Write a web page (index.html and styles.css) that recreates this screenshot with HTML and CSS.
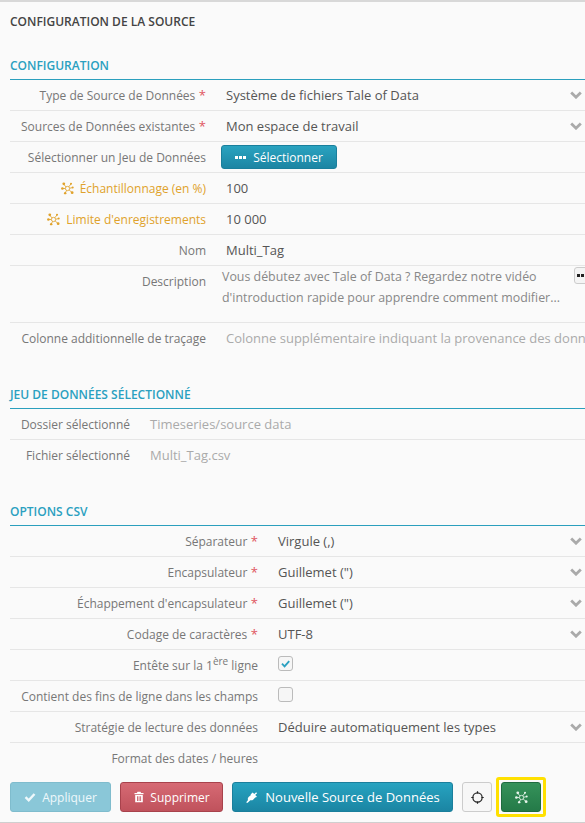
FILE: index.html
```html
<!DOCTYPE html>
<html lang="fr">
<head>
<meta charset="utf-8">
<title>Configuration de la source</title>
<link rel="stylesheet" href="styles.css">
</head>
<body>
<svg class="defs" width="0" height="0" aria-hidden="true">
  <symbol id="net" viewBox="0 0 14 14">
    <g fill="none" stroke="currentColor" stroke-width="0.900">
      <path d="M3 2.500 5.500 5.400M10.800 2 8.400 5.200M1.500 7H4.700M4.500 12 6 9.100M12 11.500 8.700 8.500M12.600 6 9.300 6.700"/>
      <circle cx="7" cy="7" r="2.300"/>
    </g>
    <g fill="currentColor">
      <circle cx="3" cy="2" r="1.500"/><circle cx="10.800" cy="1.800" r="1.100"/>
      <circle cx="1.500" cy="7" r="1.400"/><circle cx="4.500" cy="12" r="1.300"/>
      <circle cx="12" cy="11.500" r="1.500"/><circle cx="12.600" cy="6" r="1.100"/>
    </g>
  </symbol>
  <symbol id="chev" viewBox="0 0 12 8">
    <path d="M1.200 1.500 6 6.200l4.800-4.700" fill="none" stroke="currentColor" stroke-width="2.800"/>
  </symbol>
</svg>
<main class="panel">
  <h1 class="title">CONFIGURATION DE LA SOURCE</h1>

  <section class="section s-config">
    <h2 class="heading">CONFIGURATION</h2>
    <div class="row"><div class="label">Type de Source de Données<span class="req">*</span></div><div class="value">Système de fichiers Tale of Data</div><svg class="chev"><use href="#chev"/></svg></div>
    <div class="row"><div class="label">Sources de Données existantes<span class="req">*</span></div><div class="value">Mon espace de travail</div><svg class="chev"><use href="#chev"/></svg></div>
    <div class="row"><div class="label">Sélectionner un Jeu de Données</div><div class="value value-btn"><button class="btn btn-select"><span class="dots"><i></i><i></i><i></i></span>Sélectionner</button></div></div>
    <div class="row"><div class="label label-gold"><svg class="net"><use href="#net"/></svg>Échantillonnage (en %)</div><div class="value">100</div></div>
    <div class="row"><div class="label label-gold"><svg class="net"><use href="#net"/></svg>Limite d'enregistrements</div><div class="value">10 000</div></div>
    <div class="row"><div class="label">Nom</div><div class="value">Multi_Tag</div></div>
    <div class="row row-desc">
      <div class="label">Description</div>
      <div class="value value-muted">Vous débutez avec Tale of Data ? Regardez notre vidéo<br>d'introduction rapide pour apprendre comment modifier...</div>
      <button class="more"><span class="dots"><i></i><i></i></span></button>
    </div>
    <div class="row row-last"><div class="label">Colonne additionnelle de traçage</div><div class="value value-light">Colonne supplémentaire indiquant la provenance des données</div></div>
  </section>

  <section class="section s-dataset">
    <h2 class="heading">JEU DE DONNÉES SÉLECTIONNÉ</h2>
    <div class="row"><div class="label">Dossier sélectionné</div><div class="value value-light">Timeseries/source data</div></div>
    <div class="row row-last"><div class="label">Fichier sélectionné</div><div class="value value-light">Multi_Tag.csv</div></div>
  </section>

  <section class="section s-csv">
    <h2 class="heading">OPTIONS CSV</h2>
    <div class="row"><div class="label">Séparateur<span class="req">*</span></div><div class="value">Virgule (,)</div><svg class="chev"><use href="#chev"/></svg></div>
    <div class="row"><div class="label">Encapsulateur<span class="req">*</span></div><div class="value">Guillemet (")</div><svg class="chev"><use href="#chev"/></svg></div>
    <div class="row"><div class="label">Échappement d'encapsulateur<span class="req">*</span></div><div class="value">Guillemet (")</div><svg class="chev"><use href="#chev"/></svg></div>
    <div class="row"><div class="label">Codage de caractères<span class="req">*</span></div><div class="value">UTF-8</div><svg class="chev"><use href="#chev"/></svg></div>
    <div class="row"><div class="label">Entête sur la 1<sup>ère</sup> ligne</div><div class="value value-check"><span class="check"><svg viewBox="0 0 14 14"><path d="M3.200 7.200 6 10l5-5.500" fill="none" stroke="currentColor" stroke-width="2"/></svg></span></div></div>
    <div class="row"><div class="label">Contient des fins de ligne dans les champs</div><div class="value value-check"><span class="check"></span></div></div>
    <div class="row"><div class="label">Stratégie de lecture des données</div><div class="value">Déduire automatiquement les types</div><svg class="chev"><use href="#chev"/></svg></div>
    <div class="row row-last"><div class="label">Format des dates / heures</div><div class="value"></div></div>
  </section>

  <footer class="actions">
    <button class="btn btn-apply"><svg class="ico" viewBox="0 0 12 12"><path d="M1.500 6.200 4.700 9.300 10.500 3" fill="none" stroke="currentColor" stroke-width="2.400"/></svg>Appliquer</button>
    <button class="btn btn-delete"><svg class="ico ico-trash" viewBox="0 0 12 12"><path fill="currentColor" d="M4.500.8h3l.6 1.200h2.400v1.300h-9V2h2.400zM2.200 4h7.600v7.200H2.200zM4 5.200v4.800h.9V5.200zm1.600 0v4.800h.9V5.200zm1.600 0v4.800h.9V5.200z"/></svg>Supprimer</button>
    <button class="btn btn-new"><svg class="ico ico-plug" viewBox="0 0 14 14"><path fill="currentColor" d="M8.200 1.500 10 3.200 12 1.300l1 1-2 2 1.800 1.700-1 1-.5-.4-2.300 2.500c-1 1-2.200 1.200-3.300.8L3.500 12 2.300 13l-1-1 2-2.200c-.6-1.100-.3-2.300.6-3.300l2.500-2.300-.4-.4z"/></svg>Nouvelle Source de Données</button>
    <button class="btn btn-target"><svg viewBox="0 0 14 14" class="target"><circle cx="7" cy="7" r="5" fill="none" stroke="currentColor" stroke-width="1.300"/><path d="M7 .3v2.400M7 11.300v2.400M.3 7h2.400M11.300 7h2.400" stroke="currentColor" stroke-width="1.300"/></svg></button>
    <span class="highlight"><button class="btn btn-run"><svg class="net net-run"><use href="#net"/></svg></button></span>
  </footer>
</main>
</body>
</html>
```
FILE: styles.css
```css
* { box-sizing: border-box; }
html, body { margin: 0; padding: 0; }
body {
  width: 585px;
  height: 823px;
  overflow: hidden;
  background: #fafafa;
  font-family: "Open Sans", sans-serif;
  font-size: 12px;
  color: #555;
}
.defs { display: block; height: 0; }
.panel {
  height: 823px;
  padding: 0 0 0 10px;
  border-top: 2px solid #d8d8d8;
  border-bottom: 1px solid #cfcfcf;
  overflow: hidden;
}
.title {
  margin: 0;
  padding-top: 11px;
  height: 39px;
  font-size: 12px;
  line-height: 17px;
  font-weight: 600;
  color: #444;
}
.s-config { --col: 196px; padding-top: 16px; }
.s-dataset { --col: 120px; padding-top: 32px; }
.s-csv { --col: 248px; padding-top: 32px; }
.heading {
  margin: 0;
  height: 23px;
  border-bottom: 1px solid #2b9fbd;
  font-size: 12px;
  line-height: 17px;
  font-weight: 600;
  color: #2aa0c0;
}
.row {
  display: flex;
  align-items: center;
  height: 31px;
  width: 575px;
  border-bottom: 1px solid #e6e6e6;
  line-height: 17px;
  overflow: hidden;
}
.row-last { border-bottom: 0; }
.label {
  flex: 0 0 var(--col);
  text-align: right;
  color: #777;
  white-space: nowrap;
}
.label sup { font-size: 10px; line-height: 0; }
.label-gold { color: #e0a22b; display: flex; justify-content: flex-end; align-items: center; }
.req { color: #e0555f; margin-left: 3.5px; font-size: 13px; line-height: 0; }
.value {
  flex: 1 1 0;
  min-width: 0;
  padding-left: 20px;
  font-size: 13px;
  color: #555;
  white-space: nowrap;
  overflow: hidden;
}
.value-light { color: #aaa; }
.value-muted { color: #888; font-size: 12.4px; line-height: 21px; padding-left: 16px; }
.chev { width: 12px; height: 8px; margin-right: 3px; color: #aaa; flex: none; }
.net { width: 13px; height: 13px; margin-right: 6px; flex: none; }
.row-desc { height: 57px; align-items: flex-start; }
.row-desc .label { padding-top: 7px; }
.more {
  flex: none;
  width: 20px;
  height: 17px;
  margin: 1px -9px 0 0;
  padding: 0 0 0 2px;
  background: #f4f4f4;
  border: 1px solid #ccc;
  border-radius: 3px;
  display: flex;
  align-items: center;
}
.more .dots i { background: #222; }
.dots { display: inline-flex; gap: 1px; margin-right: 7px; }
.dots i { width: 3px; height: 3px; background: #fff; display: block; }
.more .dots { margin: 0; }
.btn {
  font-family: "Open Sans", sans-serif;
  font-size: 12px;
  line-height: 17px;
  color: #fff;
  border-radius: 3px;
  border: 1px solid transparent;
  display: inline-flex;
  align-items: center;
  justify-content: center;
  padding: 0;
  flex: none;
}
.btn-select {
  width: 116px;
  height: 24px;
  background: linear-gradient(#2aa3c0, #1c85a3);
  border-color: #1a7f9c;
}
.value-btn { padding-left: 15px; overflow: visible; }
.value-check { display: flex; padding-bottom: 3px; }
.check {
  width: 15px;
  height: 15px;
  border: 1px solid #bbb;
  border-radius: 3px;
  background: #f6f6f6;
  color: #2aa0c0;
  display: block;
}
.check svg { display: block; width: 13px; height: 13px; }
.actions {
  display: flex;
  align-items: center;
  height: 30px;
  margin-top: 8px;
}
.actions .btn { height: 30px; }
.ico { width: 12px; height: 12px; margin-right: 6px; flex: none; }
.ico-trash { margin-right: 5px; }
.ico-plug { width: 13px; height: 13px; margin-right: 7px; }
.btn-apply {
  width: 101px;
  background: #8ac7d8;
  border-color: #7fbccd;
  color: #eef8fb;
}
.btn-delete {
  width: 103px;
  margin-left: 9px;
  background: linear-gradient(#d66a74, #c0525c);
  border-color: #a8424c;
}
.btn-new {
  width: 221px;
  margin-left: 9px;
  font-size: 13px;
  background: linear-gradient(#27a3c0, #1b85a3);
  border-color: #1a7f9c;
}
.btn-target {
  width: 30px;
  margin-left: 9px;
  background: #f7f7f7;
  border-color: #ccc;
  color: #222;
}
.target { width: 13px; height: 13px; }
.highlight {
  display: flex;
  flex: none;
  margin-left: 4px;
  padding: 2px;
  border: 3px solid #ffe000;
  border-radius: 3px;
}
.btn-run {
  width: 40px;
  background: linear-gradient(#35925a, #247a48);
  border-color: #1f6b3f;
}
.net-run { margin: 0; color: #e8f5ec; }
```
